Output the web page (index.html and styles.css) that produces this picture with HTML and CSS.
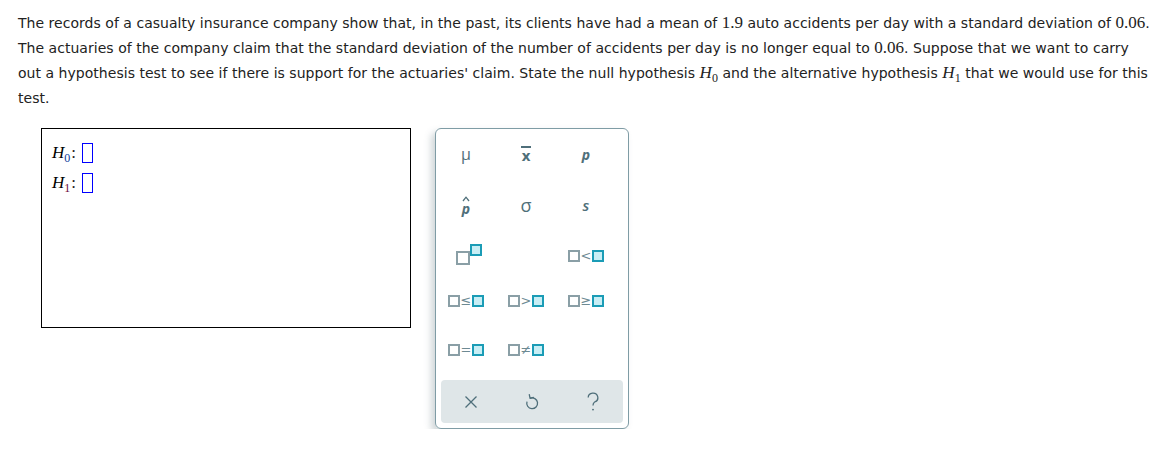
FILE: index.html
```html
<!DOCTYPE html>
<html>
<head>
<meta charset="utf-8">
<link rel="stylesheet" href="styles.css">
</head>
<body>
<div class="page">
  <p class="question">The records of a casualty insurance company show that, in the past, its clients have had a mean of <span class="num">1.9</span> auto accidents per day with a standard deviation of <span class="num">0.06</span>.<br>The actuaries of the company claim that the standard deviation of the number of accidents per day is no longer equal to <span class="num">0.06</span>. Suppose that we want to carry<br>out a hypothesis test to see if there is support for the actuaries' claim. State the null hypothesis <span class="mi">H<sub>0</sub></span> and the alternative hypothesis <span class="mi">H<sub>1</sub></span> that we would use for this<br>test.</p>
  <div class="work">
    <div class="answer">
      <div class="hrow"><span class="mi">H<sub class="s0">0</sub></span><span class="colon">:</span><span class="slot"></span></div>
      <div class="hrow"><span class="mi">H<sub class="s1">1</sub></span><span class="colon">:</span><span class="slot"></span></div>
    </div>
    <div class="palette">
      <div class="keys">
        <div class="key"><span class="sym mu">μ</span></div>
        <div class="key"><span class="sym xbar">x</span></div>
        <div class="key"><span class="sym ital">p</span></div>
        <div class="key"><span class="phat"><svg class="hat" width="8" height="6" viewBox="0 0 8 6"><path d="M1 5 L4 1.2 L7 5" stroke="#4f6f7a" stroke-width="1.3" fill="none"/></svg><span class="sym ital">p</span></span></div>
        <div class="key"><span class="sym sigma">σ</span></div>
        <div class="key"><span class="sym ital s">s</span></div>
        <div class="key"><span class="pow"><span class="gbox big"></span><span class="tbox"></span></span></div>
        <div class="key"></div>
        <div class="key"><span class="rel"><span class="gbox"></span><span class="op">&lt;</span><span class="tbox"></span></span></div>
        <div class="key"><span class="rel"><span class="gbox"></span><span class="op">≤</span><span class="tbox"></span></span></div>
        <div class="key"><span class="rel"><span class="gbox"></span><span class="op">&gt;</span><span class="tbox"></span></span></div>
        <div class="key"><span class="rel"><span class="gbox"></span><span class="op">≥</span><span class="tbox"></span></span></div>
        <div class="key"><span class="rel"><span class="gbox"></span><span class="op">=</span><span class="tbox"></span></span></div>
        <div class="key"><span class="rel"><span class="gbox"></span><span class="op">≠</span><span class="tbox"></span></span></div>
        <div class="key"></div>
      </div>
      <div class="bar">
        <div class="tool">
          <svg width="14" height="14" viewBox="0 0 14 14"><path d="M1.5 1.5 L12.5 12.5 M12.5 1.5 L1.5 12.5" stroke="#4f6f7a" stroke-width="1.3" fill="none"/></svg>
        </div>
        <div class="tool">
          <svg width="16" height="18" viewBox="0 0 16 18"><path d="M6.2 5.2 A5.4 5.4 0 1 1 3 8.6" stroke="#4f6f7a" stroke-width="1.3" fill="none"/><path d="M5.3 1.6 L6.1 5.3 L9.4 4.4" stroke="#4f6f7a" stroke-width="1.3" fill="none" stroke-linejoin="round" stroke-linecap="round"/></svg>
        </div>
        <div class="tool">
          <svg width="14" height="20" viewBox="0 0 14 20"><path d="M2.2 5.6 A4.8 4.6 0 1 1 8.6 10 C7.3 10.8 7 11.6 7 13.6" stroke="#4f6f7a" stroke-width="1.3" fill="none"/><circle cx="7" cy="17.6" r="0.95" fill="#4f6f7a"/></svg>
        </div>
      </div>
    </div>
  </div>
</div>
</body>
</html>
```
FILE: styles.css
```css
html, body {
  margin: 0;
  padding: 0;
  background: #ffffff;
}
.page {
  padding: 11px 0 0 18px;
  font-family: "DejaVu Sans", Verdana, sans-serif;
  font-size: 14px;
  letter-spacing: 0.03px;
  color: #222222;
}
.question {
  margin: 0;
  line-height: 25px;
  white-space: nowrap;
}
.num {
  font-family: "Liberation Serif", "DejaVu Serif", serif;
  font-size: 17px;
  line-height: 0;
  letter-spacing: 0;
}
.mi {
  font-family: "Liberation Serif", serif;
  font-style: italic;
  font-size: 17px;
  line-height: 0;
}
.mi sub {
  font-style: normal;
  font-size: 12px;
  vertical-align: -4px;
  line-height: 0;
}
.work {
  display: flex;
  align-items: flex-start;
  margin-top: 17px;
}
.answer {
  margin-left: 23px;
  width: 370px;
  height: 200px;
  border: 1px solid #000;
  padding: 9px 0 0 10px;
  box-sizing: border-box;
}
.hrow {
  display: flex;
  align-items: center;
  height: 30px;
}
.hrow .mi {
  font-size: 17px;
  color: #000;
  line-height: normal;
}
.s0 { color: #0b3a9a; }
.s1 { color: #6b0b3a; }
.colon {
  font-family: "Liberation Serif", serif;
  font-size: 17px;
  margin-left: 1px;
  margin-right: 6px;
}
.slot {
  display: inline-block;
  width: 9px;
  height: 18px;
  border: 1px solid #0000ff;
}
.palette {
  margin-left: 24px;
  width: 194px;
  height: 301px;
  box-sizing: border-box;
  border: 1px solid #7f9ca5;
  border-radius: 6px;
  box-shadow: -4px 4px 7px rgba(90, 110, 120, 0.28);
  display: flex;
  flex-direction: column;
}
.keys {
  display: grid;
  grid-template-columns: repeat(3, 60px);
  grid-template-rows: 50px 52px 50px 40px 58px;
  flex: 1;
}
.key {
  display: flex;
  align-items: center;
  justify-content: center;
  color: #4f6f7a;
}
.sym {
  font-family: "Open Sans", "DejaVu Sans", sans-serif;
  font-size: 16px;
  color: #4f6f7a;
  letter-spacing: 0;
}
.ital {
  font-style: italic;
  font-weight: 700;
  font-size: 14px;
}
.s { font-size: 15px; font-weight: 600; }
.xbar {
  font-weight: 700;
  font-size: 15px;
  border-top: 2px solid #4f6f7a;
  line-height: 13px;
  padding: 1px 1px 0 1px;
}
.phat {
  display: inline-flex;
  flex-direction: column;
  align-items: center;
  margin-top: 2px;
}
.phat .sym {
  line-height: 14px;
}
.hat {
  display: block;
  margin-bottom: 0;
}
.sigma { font-size: 18px; }
.pow {
  display: inline-flex;
  align-items: flex-start;
  margin-top: -4px;
  margin-left: 6px;
}
.gbox {
  display: inline-block;
  width: 8px;
  height: 8px;
  border: 2px solid #8a9fa6;
  background: #fff;
}
.gbox.big {
  width: 10px;
  height: 10px;
  margin-top: 7px;
}
.tbox {
  display: inline-block;
  width: 8px;
  height: 8px;
  border: 2px solid #1b9cb6;
  background: #c8eef5;
}
.rel {
  display: inline-flex;
  align-items: center;
}
.op {
  font-family: "DejaVu Sans", sans-serif;
  font-size: 13px;
  color: #6d8a93;
  margin: 0 1px;
  line-height: 12px;
}
.bar {
  height: 43px;
  margin: 0 5px 5px 5px;
  background: #dfe6e8;
  border-radius: 4px;
  display: grid;
  grid-template-columns: repeat(3, 1fr);
  align-items: center;
  justify-items: center;
}
.tool {
  display: flex;
  align-items: center;
  justify-content: center;
}
```
